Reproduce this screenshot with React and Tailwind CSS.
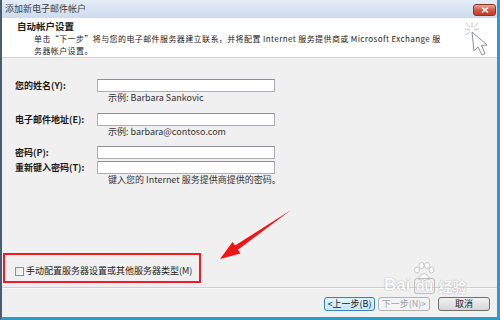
export default function App() {
  const inputCls = "h-[13px] w-[178px] bg-white border border-[#abadb3] border-t-[#8e9297]";
  return (
    <div className="w-[500px] h-[320px] relative overflow-hidden flex flex-col bg-[#f0f0f0] border-l-2 border-l-[#4a5c6e] border-r-[3px] border-r-[#2b9ad0] border-b-[3px] border-b-[#2b9ad0] font-['Noto_Sans_CJK_SC',sans-serif] text-[9px] text-[#1a1a1a]">
      {/* title bar */}
      <div className="h-[18px] shrink-0 flex items-center justify-between pl-[3px] pr-[1px] bg-gradient-to-b from-[#e4edf7] to-[#cddbec]">
        <span className="text-[#3d3d3d] leading-[10px]">添加新电子邮件帐户</span>
        <div className="w-[23px] h-[12px] mt-[2px] rounded-[3px] border border-[#8b3526] bg-gradient-to-b from-[#e9a598] via-[#d4573f] to-[#c43a22] flex items-center justify-center">
          <svg width="8" height="6" viewBox="0 0 8 6">
            <path d="M1 0.5 L7 5.5 M7 0.5 L1 5.5" stroke="#ffffff" strokeWidth="1.6" />
          </svg>
        </div>
      </div>
      {/* header */}
      <div className="h-[40px] shrink-0 bg-white border-b border-[#d2d2d2] relative pl-[15px] pt-[2px]">
        <div className="font-bold leading-[13px] text-[9.5px]">自动帐户设置</div>
        <div className="pl-[17px] leading-[11.7px] text-[8px] tracking-[0.4px]">
          <div>单击“下一步”将与您的电子邮件服务器建立联系，并将配置 Internet 服务提供商或 Microsoft Exchange 服</div>
          <div>务器帐户设置。</div>
        </div>
        <svg className="absolute left-[460px] top-[2px]" width="32" height="38" viewBox="0 0 32 38">
          <g stroke="#c4c8cc" strokeWidth="1">
            <path d="M10 2 L10 8" />
            <path d="M3 9 L8 10" />
            <path d="M4 3 L8 7" />
            <path d="M16 3 L12 7" />
            <path d="M3 15 L8 12" />
            <path d="M17 9 L12 10" />
          </g>
          <path d="M10 12 L12 31 L16 27 L20 35 L23 33.5 L19.5 25.5 L25 25 Z" fill="#ffffff" stroke="#8a8f94" strokeWidth="1" strokeLinejoin="round" />
        </svg>
      </div>
      {/* body */}
      <div className="flex-1 flex flex-col">
        <div className="mt-[21px] pl-[13px] grid grid-cols-[82px_178px]">
          <div className="font-bold flex items-center h-[13px]">您的姓名(Y):</div>
          <div className={inputCls}></div>
          <div></div>
          <div className="h-[12px] leading-[12px] pl-[11px] text-[#333]">示例: Barbara Sankovic</div>

          <div className="mt-[9px] font-bold flex items-center h-[13px]">电子邮件地址(E):</div>
          <div className={"mt-[9px] " + inputCls}></div>
          <div></div>
          <div className="h-[12px] leading-[12px] pl-[11px] text-[#333]">示例: barbara@contoso.com</div>

          <div className="mt-[8px] font-bold flex items-center h-[13px]">密码(P):</div>
          <div className={"mt-[8px] " + inputCls}></div>
          <div className="mt-[2px] font-bold flex items-center h-[13px]">重新键入密码(T):</div>
          <div className={"mt-[2px] " + inputCls}></div>
          <div></div>
          <div className="h-[12px] leading-[12px] pl-[11px] text-[#333] whitespace-nowrap">键入您的 Internet 服务提供商提供的密码。</div>
        </div>

        <div className="mt-[67px] ml-[1px] w-[198px] h-[30px] border-2 border-[#ee1c24] flex items-center pl-[10px] pt-[6px] gap-[2px]">
          <div className="w-[9px] h-[9px] border border-[#8f8f8f] bg-gradient-to-br from-[#e6e6e6] to-[#fafafa]"></div>
          <span className="text-[#222] leading-[10px]">手动配置服务器设置或其他服务器类型(M)</span>
        </div>

        <div className="mt-[4px] h-px bg-[#cfcfcf]"></div>
        <div className="h-px bg-[#fbfbfb]"></div>

        <div className="mt-[8px] flex justify-end pr-[7px]">
          <div className="w-[51px] h-[14px] rounded-[3px] border border-[#3c7fb1] bg-gradient-to-b from-[#eaf6fd] to-[#c4e5f6] shadow-[inset_0_0_0_1px_#d9f0fc] flex items-center justify-center leading-[10px]">&lt;上一步(B)</div>
          <div className="ml-[3px] w-[52px] h-[14px] rounded-[3px] border border-[#adb2b5] bg-[#f4f4f4] text-[#a0a0a0] flex items-center justify-center leading-[10px]">下一步(N)&gt;</div>
          <div className="ml-[8px] w-[52px] h-[14px] rounded-[3px] border border-[#707070] bg-gradient-to-b from-[#f2f2f2] to-[#d6d6d6] flex items-center justify-center leading-[10px]">取消</div>
        </div>
      </div>

      {/* red annotation arrow */}
      <svg className="absolute left-[213px] top-[205px]" width="82" height="60" viewBox="0 0 82 60">
        <polygon points="5,54 17.5,36.9 20.1,40.6 76,5 22.9,44.8 25.5,48.5" fill="#f01414" />
      </svg>

      {/* watermark */}
      <div className="absolute left-[382px] top-[262px] flex items-end gap-[2px] text-white font-['Liberation_Sans',sans-serif] font-bold [text-shadow:0_0_1px_#9a9a9a,0_0_1px_#9a9a9a] opacity-80">
        <span className="text-[17px] leading-[18px]">Bai</span>
        <div className="flex flex-col items-center">
          <svg width="24" height="20" viewBox="0 0 24 20">
            <g fill="#ffffff" stroke="#b0b0b0" strokeWidth="0.8">
              <ellipse cx="5" cy="8" rx="2.5" ry="3" />
              <ellipse cx="9.5" cy="3.5" rx="2.5" ry="3" />
              <ellipse cx="15" cy="3.5" rx="2.5" ry="3" />
              <ellipse cx="19.5" cy="8" rx="2.5" ry="3" />
              <path d="M6 17 Q12 6 18 17 Q12 20 6 17 Z" />
            </g>
          </svg>
          <span className="text-[14px] leading-[14px] border border-[#b0b0b0] rounded-[3px] px-[1px] -mt-[4px]">du</span>
        </div>
        <span className="text-[14px] leading-[16px] font-['Noto_Sans_CJK_SC',sans-serif]">经验</span>
      </div>
    </div>
  );
}
